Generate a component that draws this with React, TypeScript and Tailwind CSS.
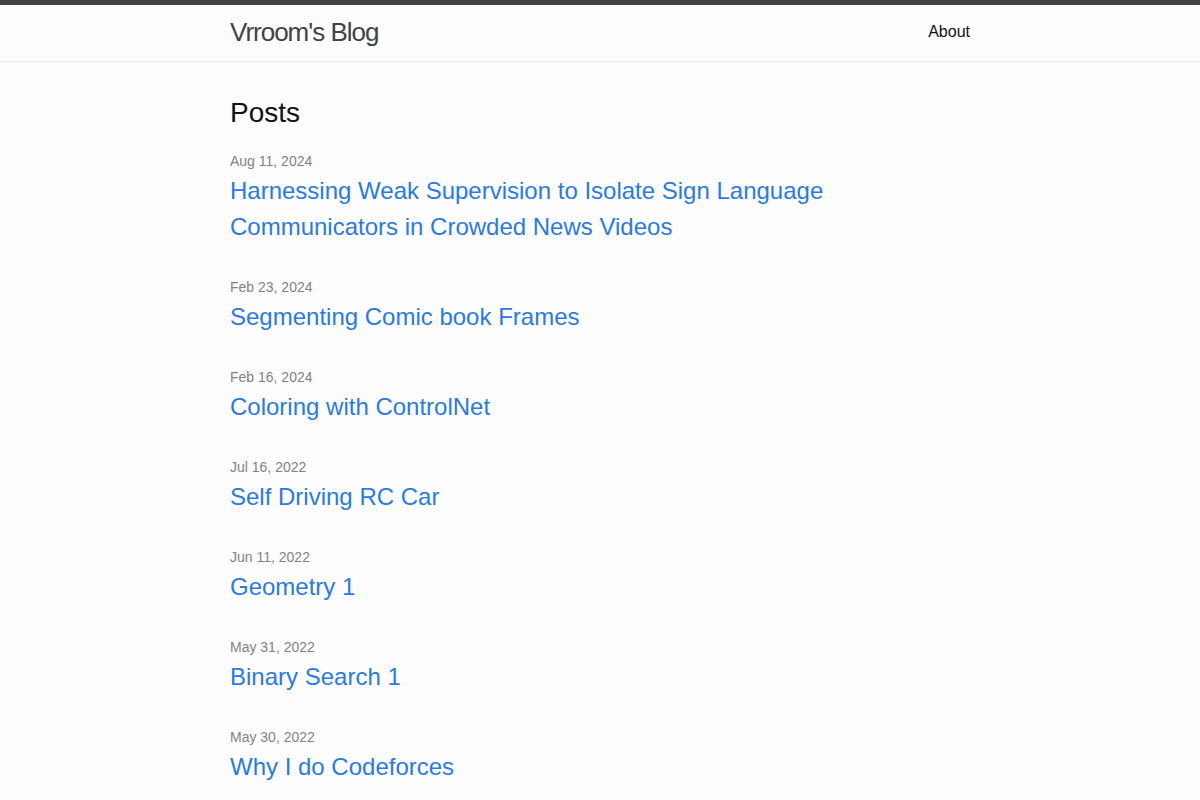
const posts = [
  { date: "Aug 11, 2024", title: "Harnessing Weak Supervision to Isolate Sign Language Communicators in Crowded News Videos" },
  { date: "Feb 23, 2024", title: "Segmenting Comic book Frames" },
  { date: "Feb 16, 2024", title: "Coloring with ControlNet" },
  { date: "Jul 16, 2022", title: "Self Driving RC Car" },
  { date: "Jun 11, 2022", title: "Geometry 1" },
  { date: "May 31, 2022", title: "Binary Search 1" },
  { date: "May 30, 2022", title: "Why I do Codeforces" },
];

const App = () => {
  return (
    <div className="min-h-screen bg-[#fdfdfd] text-[#111] font-['Liberation_Sans',Arial,sans-serif] text-base leading-normal">
      {/* header */}
      <header className="border-t-[5px] border-t-[#424242] border-b border-b-[#e8e8e8] min-h-[62px]">
        <div className="max-w-[740px] mx-auto flex justify-between items-start">
          <a href="#" className="text-[26px] leading-[54px] tracking-[-1px] font-light text-[#424242]">
            Vrroom's Blog
          </a>
          <nav className="leading-[54px]">
            <a href="#" className="text-[#111] text-base">About</a>
          </nav>
        </div>
      </header>

      {/* posts */}
      <main className="py-[30px]">
        <div className="max-w-[740px] mx-auto">
          <h2 className="text-[28px] leading-[42px] mb-[17px]">Posts</h2>
          <ul>
            {posts.map((post, i) => (
              <li key={i} className="mb-[32px]">
                <span className="block text-sm leading-[21px] text-[#828282]">{post.date}</span>
                <h3 className="mt-[1px]">
                  <a href="#" className="block text-2xl leading-[36px] text-[#2a7ae2] pr-[140px]">
                    {post.title}
                  </a>
                </h3>
              </li>
            ))}
          </ul>
        </div>
      </main>
    </div>
  );
};

export default App;
